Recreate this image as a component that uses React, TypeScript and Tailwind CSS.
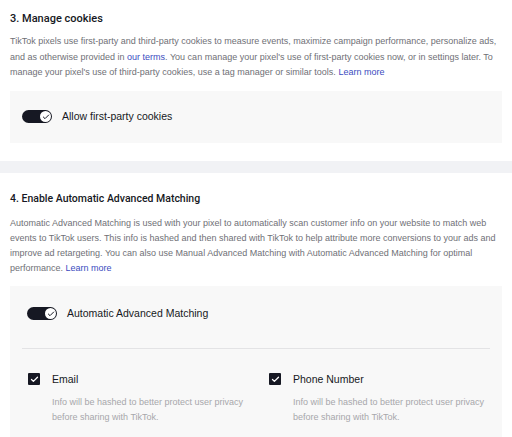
import { Check } from "lucide-react";

const FONT = { fontFamily: '"Liberation Sans", Arial, sans-serif' };
const HEAD = { fontFamily: 'Roboto, "Liberation Sans", Arial, sans-serif' };

function Toggle() {
  return (
    <span className="relative inline-flex h-[13px] w-[30px] shrink-0 items-center rounded-full bg-[#161823]">
      <span className="absolute right-[1px] flex h-[11px] w-[11px] items-center justify-center rounded-full bg-white">
        <Check className="h-[8px] w-[8px] text-[#161823]" strokeWidth={3} />
      </span>
    </span>
  );
}

function Checkbox() {
  return (
    <span className="flex h-[12px] w-[12px] shrink-0 items-center justify-center rounded-[1px] bg-[#161823]">
      <Check className="h-[9px] w-[9px] text-white" strokeWidth={3.5} />
    </span>
  );
}

function Field({ label }: { label: string }) {
  return (
    <div className="flex flex-col">
      <div className="flex items-center gap-[12px]">
        <Checkbox />
        <span className="text-[10.5px] leading-[15px] text-[#161823]">{label}</span>
      </div>
      <p className="mt-[8px] pl-[24px] text-[9px] leading-[15px] text-[#a7a7ab]">
        Info will be hashed to better protect user privacy
        <br />
        before sharing with TikTok.
      </p>
    </div>
  );
}

export default function App() {
  return (
    <div className="h-[437px] w-[512px] overflow-hidden bg-white" style={FONT}>
      <section className="px-[10px] pt-[11px] pb-[18px]">
        <h2 className="text-[11px] leading-[15px] font-medium text-[#161823]" style={HEAD}>
          3. Manage cookies
        </h2>
        <p className="mt-[8px] text-[9px] leading-[15.5px] text-[#6f7076]">
          TikTok pixels use first-party and third-party cookies to measure events, maximize campaign performance, personalize ads,
          and as otherwise provided in <a className="text-[#3b4cc0]">our terms</a>. You can manage your pixel's use of first-party cookies now, or in settings later. To
          manage your pixel's use of third-party cookies, use a tag manager or similar tools.{" "}
          <a className="text-[#3b4cc0]">Learn more</a>
        </p>
        <div className="mt-[10px] flex h-[52px] items-center gap-[10px] bg-[#f8f8f8] px-[12px]">
          <Toggle />
          <span className="text-[10.5px] text-[#161823]">Allow first-party cookies</span>
        </div>
      </section>

      <div className="h-[12px] bg-[#f1f2f5]" />

      <section className="px-[10px] pt-[18px]">
        <h2 className="text-[10.5px] leading-[15px] font-medium text-[#161823]" style={HEAD}>
          4. Enable Automatic Advanced Matching
        </h2>
        <p className="mt-[10px] text-[9px] leading-[15px] text-[#6f7076]">
          Automatic Advanced Matching is used with your pixel to automatically scan customer info on your website to match web
          events to TikTok users. This info is hashed and then shared with TikTok to help attribute more conversions to your ads and
          improve ad retargeting. You can also use Manual Advanced Matching with Automatic Advanced Matching for optimal
          performance. <a className="text-[#3b4cc0]">Learn more</a>
        </p>
        <div className="mt-[10px] bg-[#f8f8f8] px-[12px] pb-[20px]">
          <div className="flex h-[56px] items-center gap-[10px] pl-[5px]">
            <Toggle />
            <span className="text-[10.5px] text-[#161823]">Automatic Advanced Matching</span>
          </div>
          <div className="mt-[6px] h-px bg-[#e3e3e5]" />
          <div className="grid grid-cols-[241px_1fr] pt-[23px] pl-[6px]">
            <Field label="Email" />
            <Field label="Phone Number" />
          </div>
        </div>
      </section>
    </div>
  );
}
